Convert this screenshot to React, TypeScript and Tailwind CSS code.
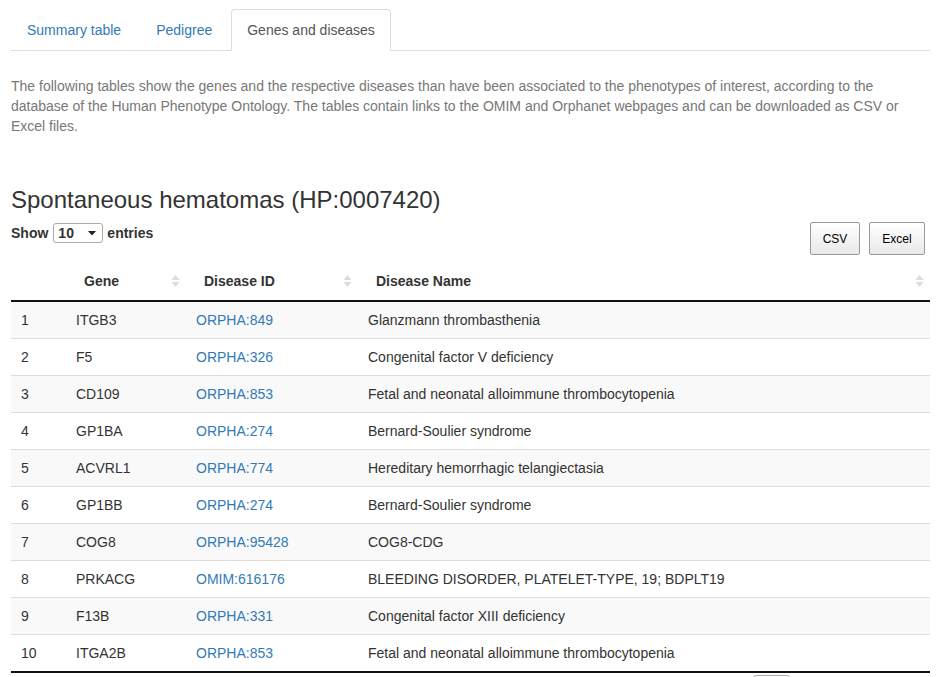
import React from 'react';

const rows = [
  { gene: 'ITGB3', id: 'ORPHA:849', name: 'Glanzmann thrombasthenia' },
  { gene: 'F5', id: 'ORPHA:326', name: 'Congenital factor V deficiency' },
  { gene: 'CD109', id: 'ORPHA:853', name: 'Fetal and neonatal alloimmune thrombocytopenia' },
  { gene: 'GP1BA', id: 'ORPHA:274', name: 'Bernard-Soulier syndrome' },
  { gene: 'ACVRL1', id: 'ORPHA:774', name: 'Hereditary hemorrhagic telangiectasia' },
  { gene: 'GP1BB', id: 'ORPHA:274', name: 'Bernard-Soulier syndrome' },
  { gene: 'COG8', id: 'ORPHA:95428', name: 'COG8-CDG' },
  { gene: 'PRKACG', id: 'OMIM:616176', name: 'BLEEDING DISORDER, PLATELET-TYPE, 19; BDPLT19' },
  { gene: 'F13B', id: 'ORPHA:331', name: 'Congenital factor XIII deficiency' },
  { gene: 'ITGA2B', id: 'ORPHA:853', name: 'Fetal and neonatal alloimmune thrombocytopenia' },
];

const SortIcon = () => (
  <svg width="9" height="14" viewBox="0 0 9 14" className="absolute right-[6px] top-[13px]">
    <path d="M4.5 1 L8.5 6 L0.5 6 Z" fill="#dcdcdc" />
    <path d="M4.5 13 L8.5 8 L0.5 8 Z" fill="#dcdcdc" />
  </svg>
);

const Tab = ({ label, active }: { label: string; active?: boolean }) => (
  <li className="mr-[3px] -mb-px">
    <a
      className={
        active
          ? 'block px-[15px] py-[10px] leading-[20px] text-[#555] bg-white border border-[#ddd] border-b-transparent rounded-t-[4px]'
          : 'block px-[15px] py-[10px] leading-[20px] text-[#337ab7] border border-transparent'
      }
    >
      {label}
    </a>
  </li>
);

export default function App() {
  return (
    <div className="w-[937px] h-[677px] overflow-hidden bg-white text-[14px] leading-[20px] text-[#333] font-['Liberation_Sans',Arial,sans-serif]">
      <div className="pl-[11px] pr-[7px] pt-[9px]">
        <ul className="flex border-b border-[#ddd]">
          <Tab label="Summary table" />
          <Tab label="Pedigree" />
          <Tab label="Genes and diseases" active />
        </ul>

        <p className="mt-[25px] text-[#777] pr-[10px]">
          The following tables show the genes and the respective diseases than have been associated to the phenotypes of interest, according to the database of the Human Phenotype Ontology. The tables contain links to the OMIM and Orphanet webpages and can be downloaded as CSV or Excel files.
        </p>

        <h3 className="mt-[51px] text-[24px] leading-[26px] text-[#333]">Spontaneous hematomas (HP:0007420)</h3>

        <div className="flex justify-between items-start">
          <label className="mt-[10px] flex items-center font-bold text-[#333] text-[14px]">
            Show
            <span className="ml-[5px] mr-[4px] relative w-[50px] h-[20px] border border-[#aaa] rounded-[3px] bg-white flex items-center pl-[4px] font-bold">
              10
              <svg width="8" height="5" viewBox="0 0 8 5" className="absolute right-[6px] top-[7px]">
                <path d="M0 0 L8 0 L4 4.5 Z" fill="#222" />
              </svg>
            </span>
            entries
          </label>
          <div className="flex gap-[9px] mt-[9px] mr-[5px]">
            <button className="h-[33px] w-[50px] border border-[#999] rounded-[2px] bg-gradient-to-b from-white to-[#e9e9e9] text-[12px] text-black">
              CSV
            </button>
            <button className="h-[33px] w-[56px] border border-[#999] rounded-[2px] bg-gradient-to-b from-white to-[#e9e9e9] text-[12px] text-black">
              Excel
            </button>
          </div>
        </div>

        <table className="mt-[6px] w-[919px] border-collapse table-fixed">
          <colgroup>
            <col className="w-[55px]" />
            <col className="w-[120px]" />
            <col className="w-[172px]" />
            <col />
          </colgroup>
          <thead>
            <tr className="border-b-2 border-[#111]">
              <th className="relative pt-[10px] pb-[9px] px-[18px] text-left font-bold"></th>
              <th className="relative pt-[10px] pb-[9px] px-[18px] text-left font-bold">
                Gene
                <SortIcon />
              </th>
              <th className="relative pt-[10px] pb-[9px] px-[18px] text-left font-bold">
                Disease ID
                <SortIcon />
              </th>
              <th className="relative pt-[10px] pb-[9px] px-[18px] text-left font-bold">
                Disease Name
                <SortIcon />
              </th>
            </tr>
          </thead>
          <tbody>
            {rows.map((r, i) => (
              <tr
                key={i}
                className={(i % 2 === 0 ? 'bg-[#f9f9f9]' : 'bg-white') + ' ' + (i === 0 ? '' : 'border-t border-[#ddd]')}
              >
                <td className="py-[8px] px-[10px] h-[37px]">{i + 1}</td>
                <td className="py-[8px] px-[10px]">{r.gene}</td>
                <td className="py-[8px] px-[10px] text-[#337ab7]">{r.id}</td>
                <td className="py-[8px] px-[10px]">{r.name}</td>
              </tr>
            ))}
          </tbody>
          <tfoot>
            <tr className="border-t-2 border-[#111]">
              <td colSpan={4}></td>
            </tr>
          </tfoot>
        </table>
        <div className="flex justify-end pr-[140px] mt-[2px]">
          <div className="w-[37px] h-[20px] border border-[#aaa] rounded-[3px]"></div>
        </div>
      </div>
    </div>
  );
}
